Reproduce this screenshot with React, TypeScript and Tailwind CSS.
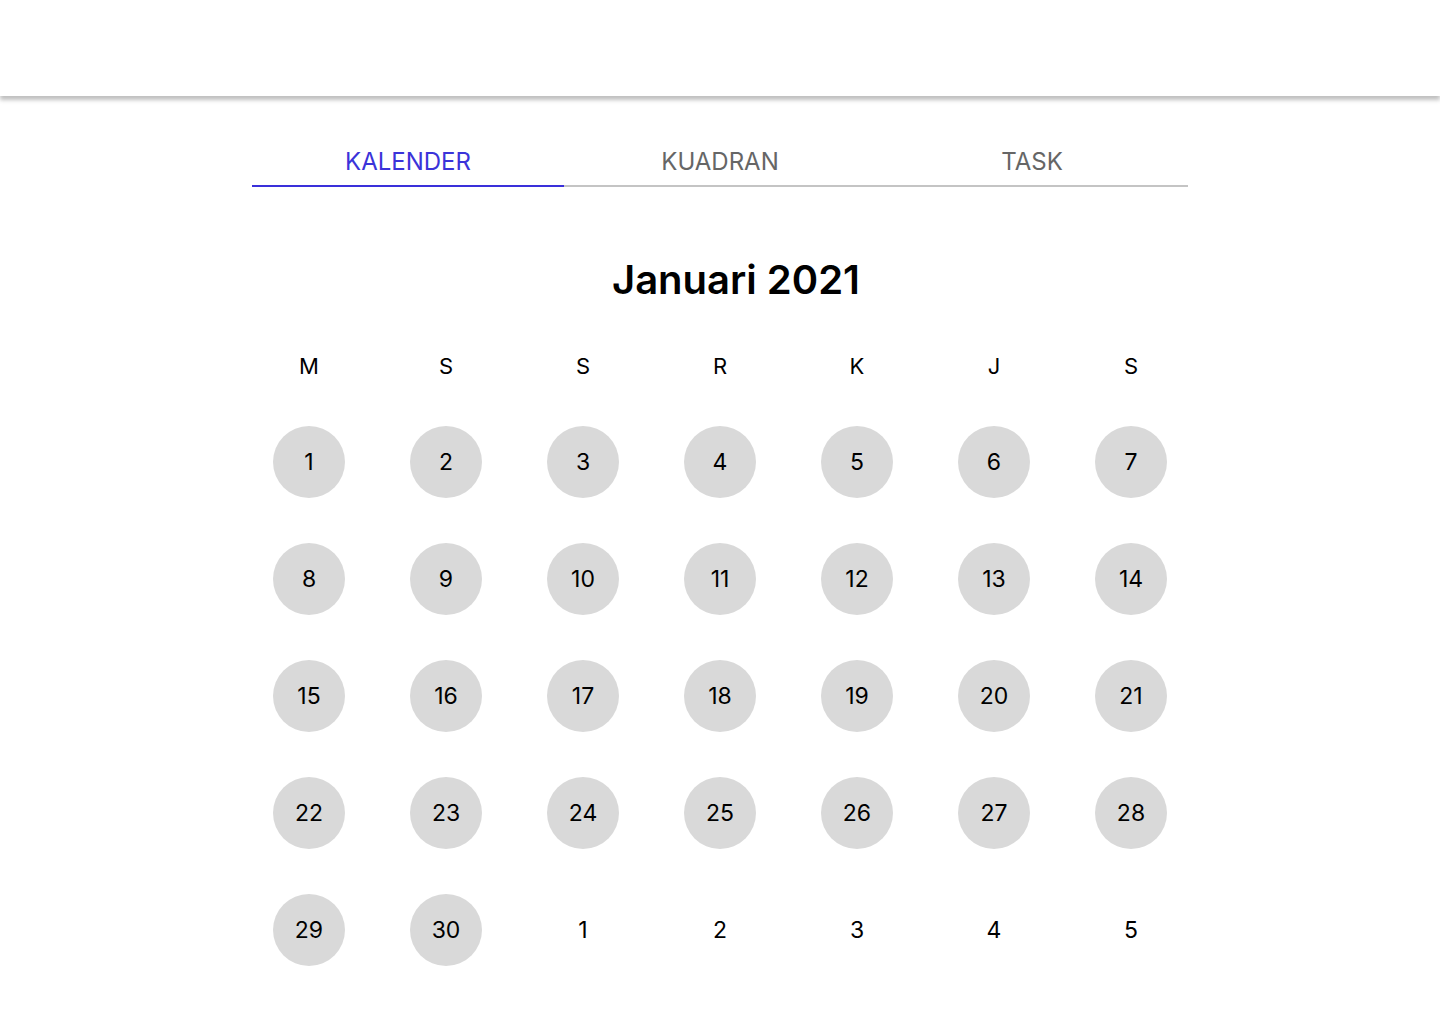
import { useState } from 'react';

// --- Data ---
const TABS = ['KALENDER', 'KUADRAN', 'TASK'];
const WEEKDAYS = ['M', 'S', 'S', 'R', 'K', 'J', 'S'];

interface Day {
  label: number;
  inMonth: boolean;
}

const DAYS: Day[] = [
  ...Array.from({ length: 30 }, (_, i) => ({ label: i + 1, inMonth: true })),
  ...Array.from({ length: 5 }, (_, i) => ({ label: i + 1, inMonth: false })),
];

// --- Sub-Component: Tabs ---
const Tabs = ({ active, setActive }: { active: number; setActive: (i: number) => void }) => (
  <div className="mx-auto mt-[43px] flex w-[936px] border-b-2 border-[#c4c4c4]">
    {TABS.map((tab, i) => (
      <button
        key={tab}
        onClick={() => setActive(i)}
        className={`-mb-[2px] flex h-[48px] w-[312px] items-center justify-center border-b-2 text-[24px] ${
          active === i ? 'border-[#3a30da] text-[#3b33d9]' : 'border-transparent text-[#666666]'
        }`}
      >
        {tab}
      </button>
    ))}
  </div>
);

// --- Sub-Component: Calendar ---
const Calendar = () => (
  <div className="mx-auto w-[959px]">
    <h1 className="mt-[69px] pl-8 text-center text-[40px] font-semibold leading-[48px] text-black">
      Januari 2021
    </h1>

    {/* Weekday header */}
    <div className="mt-[44px] grid grid-cols-7">
      {WEEKDAYS.map((d, i) => (
        <div key={i} className="flex h-9 items-center justify-center text-[22px] text-black">
          {d}
        </div>
      ))}
    </div>

    {/* Day cells */}
    <div className="mt-[42px] grid grid-cols-7 gap-y-[45px]">
      {DAYS.map((day, i) => (
        <div key={i} className="flex justify-center">
          <div
            className={`flex h-[72px] w-[72px] items-center justify-center rounded-full pt-px text-[23px] text-black ${
              day.inMonth ? 'bg-[#d9d9d9]' : ''
            }`}
          >
            {day.label}
          </div>
        </div>
      ))}
    </div>
  </div>
);

// --- Main Component ---
export default function App() {
  const [active, setActive] = useState(0);

  return (
    <div className="min-h-screen bg-white font-['Inter',sans-serif]">
      <header className="h-24 bg-white shadow-[0_4px_4px_rgba(0,0,0,0.25)]" />
      <Tabs active={active} setActive={setActive} />
      <Calendar />
    </div>
  );
}
